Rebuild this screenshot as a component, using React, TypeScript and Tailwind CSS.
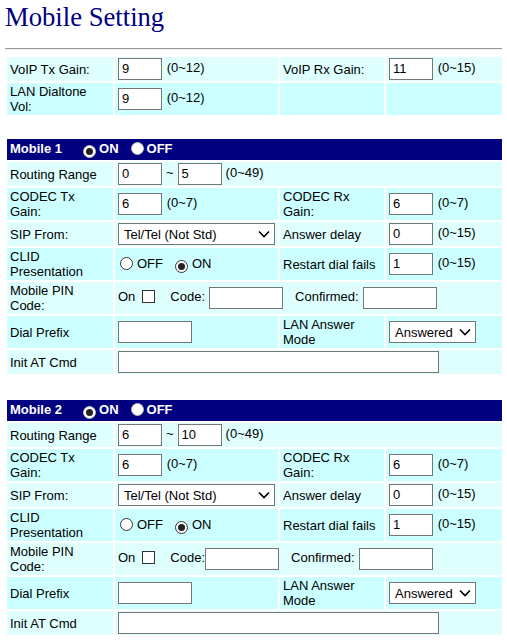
import type { ReactNode } from 'react';

function Campo({ valor, largura = 'w-[44px]' }: { valor?: string; largura?: string }) {
  return (
    <span className={`inline-block h-[22px] ${largura} border border-[#767676] bg-white px-[3px] align-middle text-[13px] leading-[20px] text-black`}>
      {valor}
    </span>
  );
}

function Lista({ valor, largura }: { valor: string; largura: string }) {
  return (
    <span className={`inline-flex h-[22px] ${largura} items-center justify-between border border-[#767676] bg-white pl-[5px] pr-[4px] align-middle text-[13px] text-black`}>
      <span>{valor}</span>
      <svg width="12" height="8" viewBox="0 0 12 8" fill="none" stroke="#000" strokeWidth="1.6">
        <polyline points="1,1.5 6,6.5 11,1.5" />
      </svg>
    </span>
  );
}

function Radio({ marcado, cabecalho = false }: { marcado: boolean; cabecalho?: boolean }) {
  return (
    <span
      className={`inline-flex h-[13px] w-[13px] items-center justify-center rounded-full border align-[-2px] ${
        cabecalho ? 'border-[#bdbdbd] bg-white' : 'border-[#333] bg-white'
      }`}
    >
      {marcado && <span className="h-[7px] w-[7px] rounded-full bg-[#222]" />}
    </span>
  );
}

function Caixa() {
  return <span className="inline-block h-[13px] w-[13px] border border-[#333] bg-white align-[-2px]" />;
}

function Celula({ children, cor, span, rotulo = false }: { children?: ReactNode; cor: string; span?: number; rotulo?: boolean }) {
  return (
    <td
      colSpan={span}
      className={`${cor} py-px pl-[3px] align-middle text-[13px] leading-[15px] ${rotulo ? 'pr-[14px]' : 'pr-[3px]'}`}
    >
      {children}
    </td>
  );
}

const claro = 'bg-[#dfffff]';
const escuro = 'bg-[#ccffff]';

function Colunas() {
  return (
    <colgroup>
      <col className="w-[106px]" />
      <col className="w-[163px]" />
      <col className="w-[104px]" />
      <col className="w-[116px]" />
    </colgroup>
  );
}

function Celular({ n, de, ate, colado }: { n: number; de: string; ate: string; colado?: boolean }) {
  return (
    <table className={`ml-[5px] ${colado ? 'mt-[22px]' : 'mt-[20px]'} w-[499px] table-fixed border-separate border-spacing-[2px]`}>
      <Colunas />
      <tbody>
        <tr>
          <td colSpan={4} className="h-[21px] bg-[#000080] px-[3px] text-[13px] font-bold leading-[15px] text-white">
            <span className="mr-[21px]">Mobile {n}</span>
            <Radio marcado cabecalho />
            <span className="ml-[3px] mr-[12px]">ON</span>
            <Radio marcado={false} cabecalho />
            <span className="ml-[3px]">OFF</span>
          </td>
        </tr>
        <tr>
          <Celula cor={claro} rotulo>Routing Range</Celula>
          <Celula cor={claro} span={3}>
            <Campo valor={de} />
            <span className="mx-[4px]">~</span>
            <Campo valor={ate} />
            <span className="ml-[4px]">(0~49)</span>
          </Celula>
        </tr>
        <tr>
          <Celula cor={escuro} rotulo>CODEC Tx Gain:</Celula>
          <Celula cor={escuro}>
            <Campo valor="6" /> <span className="ml-px">(0~7)</span>
          </Celula>
          <Celula cor={escuro}>CODEC Rx Gain:</Celula>
          <Celula cor={escuro}>
            <Campo valor="6" /> <span className="ml-px">(0~7)</span>
          </Celula>
        </tr>
        <tr>
          <Celula cor={claro} rotulo>SIP From:</Celula>
          <Celula cor={claro}>
            <Lista valor="Tel/Tel (Not Std)" largura="w-[157px]" />
          </Celula>
          <Celula cor={claro}>Answer delay</Celula>
          <Celula cor={claro}>
            <Campo valor="0" /> <span className="ml-px">(0~15)</span>
          </Celula>
        </tr>
        <tr>
          <Celula cor={escuro} rotulo>CLID Presentation</Celula>
          <Celula cor={escuro}>
            <span className="ml-[2px]">
              <Radio marcado={false} />
            </span>
            <span className="ml-[4px] mr-[12px]">OFF</span>
            <Radio marcado />
            <span className="ml-[4px]">ON</span>
          </Celula>
          <Celula cor={escuro}>Restart dial fails</Celula>
          <Celula cor={escuro}>
            <Campo valor="1" /> <span className="ml-px">(0~15)</span>
          </Celula>
        </tr>
        <tr>
          <Celula cor={claro} rotulo>Mobile PIN Code:</Celula>
          <Celula cor={claro} span={3}>
            <span className="mr-[7px]">On</span>
            <Caixa />
            <span className={`ml-[15px] ${colado ? 'mr-0' : 'mr-[4px]'}`}>Code:</span>
            <Campo largura="w-[74px]" />
            <span className="ml-[12px] mr-[4px]">Confirmed:</span>
            <Campo largura="w-[74px]" />
          </Celula>
        </tr>
        <tr>
          <Celula cor={escuro} rotulo>Dial Prefix</Celula>
          <Celula cor={escuro}>
            <Campo largura="w-[74px]" />
          </Celula>
          <Celula cor={escuro}>LAN Answer Mode</Celula>
          <Celula cor={escuro}>
            <Lista valor="Answered" largura="w-[87px]" />
          </Celula>
        </tr>
        <tr>
          <Celula cor={claro} rotulo>Init AT Cmd</Celula>
          <Celula cor={claro} span={3}>
            <Campo largura="w-[321px]" />
          </Celula>
        </tr>
      </tbody>
    </table>
  );
}

export default function App() {
  return (
    <div className="min-h-[640px] w-[507px] bg-white pt-[2px] font-['Liberation_Sans',Arial,sans-serif] text-black">
      <h1 className="ml-[5px] font-['Liberation_Serif','Times_New_Roman',serif] text-[26.67px] leading-[30px] text-[#000080]">
        Mobile Setting
      </h1>
      <div className="ml-[5px] mt-[16px] h-[2px] w-[497px] border-t border-t-[#9a9a9a] border-b border-b-[#eeeeee]" />

      <table className="ml-[5px] mt-[5px] w-[499px] table-fixed border-separate border-spacing-[2px]">
        <Colunas />
        <tbody>
          <tr>
            <Celula cor={claro} rotulo>VoIP Tx Gain:</Celula>
            <Celula cor={claro}>
              <Campo valor="9" /> <span className="ml-px">(0~12)</span>
            </Celula>
            <Celula cor={claro}>VoIP Rx Gain:</Celula>
            <Celula cor={claro}>
              <Campo valor="11" /> <span className="ml-px">(0~15)</span>
            </Celula>
          </tr>
          <tr>
            <Celula cor={escuro} rotulo>LAN Dialtone Vol:</Celula>
            <Celula cor={escuro}>
              <Campo valor="9" /> <span className="ml-px">(0~12)</span>
            </Celula>
            <Celula cor={escuro} />
            <Celula cor={escuro} />
          </tr>
        </tbody>
      </table>

      <Celular n={1} de="0" ate="5" />
      <Celular n={2} de="6" ate="10" colado />
    </div>
  );
}
